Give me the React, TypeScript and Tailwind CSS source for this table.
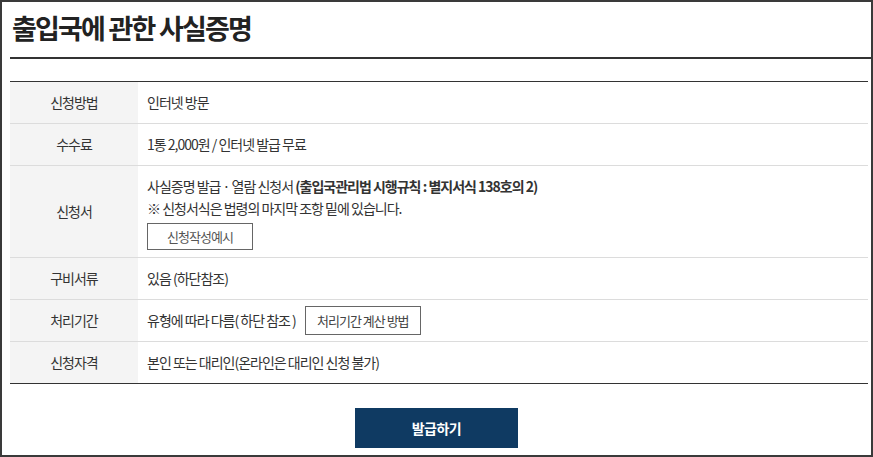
import React from 'react';

const font = { fontFamily: '"Noto Sans CJK KR", "Noto Sans", sans-serif' };

type RowProps = {
  label: string;
  children: React.ReactNode;
  tall?: boolean;
  last?: boolean;
};

const Row: React.FC<RowProps> = ({ label, children, tall, last }) => (
  <div
    className={`flex ${tall ? 'h-[92px]' : 'h-[42px]'} ${
      last ? 'border-b border-[#333]' : 'border-b border-[#dcdcdc]'
    }`}
  >
    <div className="w-[128px] shrink-0 bg-[#f4f4f4] flex items-center justify-center text-[14px] text-[#333] tracking-[-1px]">
      {label}
    </div>
    <div className="flex-1 pl-[9px] flex items-center text-[14px] text-[#333] tracking-[-1px]">
      {children}
    </div>
  </div>
);

export default function App() {
  return (
    <div
      style={font}
      className="w-[873px] h-[457px] border-2 border-[#3a3a3a] bg-white flex flex-col"
    >
      <div className="h-[55px] flex items-center pl-[10px] pb-[3px]">
        <h1 className="text-[27px] font-bold text-[#222] tracking-[-1.8px]">
          출입국에 관한 사실증명
        </h1>
      </div>
      <div className="ml-[8px] h-[2px] bg-[#333]" />

      <div className="ml-[8px] mr-[3px] mt-[22px] border-t border-[#333]">
        <Row label="신청방법">인터넷 방문</Row>
        <Row label="수수료">1통 2,000원 / 인터넷 발급 무료</Row>
        <Row label="신청서" tall>
          <div className="flex flex-col self-stretch pt-[9px]">
            <p className="leading-[22px]">
              사실증명 발급 · 열람 신청서{' '}
              <span className="font-bold">(출입국관리법 시행규칙 : 별지서식 138호의 2)</span>
            </p>
            <p className="leading-[22px]">※ 신청서식은 법령의 마지막 조항 밑에 있습니다.</p>
            <button className="mt-[4px] w-[106px] h-[27px] border border-[#666] text-[13px] text-[#555] tracking-[-1px] bg-white">
              신청작성예시
            </button>
          </div>
        </Row>
        <Row label="구비서류">있음 (하단참조)</Row>
        <Row label="처리기간">
          <span>유형에 따라 다름( 하단 참조 )</span>
          <button className="ml-[9px] w-[116px] h-[29px] border border-[#666] text-[13px] text-[#444] tracking-[-1px] bg-white">
            처리기간 계산 방법
          </button>
        </Row>
        <Row label="신청자격" last>
          본인 또는 대리인(온라인은 대리인 신청 불가)
        </Row>
      </div>

      <div className="flex justify-center mt-[24px]">
        <button className="w-[163px] h-[40px] bg-[#0f3a62] text-white text-[14px] font-bold tracking-[-0.5px]">
          발급하기
        </button>
      </div>
    </div>
  );
}
